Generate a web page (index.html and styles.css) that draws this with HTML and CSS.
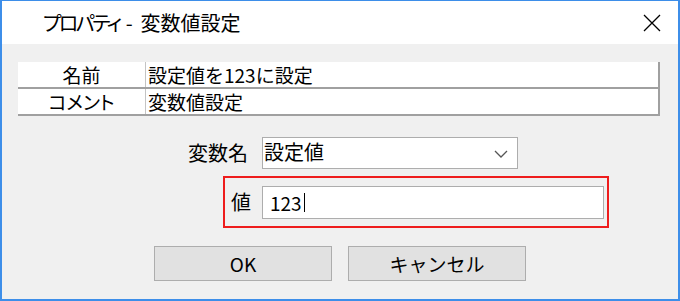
FILE: index.html
```html
<!DOCTYPE html>
<html lang="ja">
<head>
<meta charset="utf-8">
<title>プロパティ - 変数値設定</title>
<link rel="stylesheet" href="styles.css">
</head>
<body>
<div class="window">
  <div class="titlebar">
    <div class="title"><span class="t-kana">プロパティ</span><span class="t-dash">-</span><span>変数値設定</span></div>
    <svg class="close" width="18" height="18" viewBox="0 0 18 18"><path d="M1 1 L17 17 M17 1 L1 17" stroke="#000" stroke-width="1.3" fill="none"/></svg>
  </div>
  <div class="client">
    <div class="grid">
      <div class="row">
        <div class="cell key">名前</div>
        <div class="cell val">設定値を123に設定</div>
      </div>
      <div class="row">
        <div class="cell key"><span class="kana">コメント</span></div>
        <div class="cell val">変数値設定</div>
      </div>
    </div>
    <div class="field-row">
      <div class="label">変数名</div>
      <div class="combo">
        <span>設定値</span>
        <svg class="chev" width="14" height="8" viewBox="0 0 14 8"><path d="M1 1 L7 7 L13 1" stroke="#555" stroke-width="1.3" fill="none"/></svg>
      </div>
    </div>
    <div class="highlight">
      <div class="label small">値</div>
      <div class="textbox"><span>123</span><span class="caret"></span></div>
    </div>
    <div class="buttons">
      <div class="btn">OK</div>
      <div class="btn">キャンセル</div>
    </div>
  </div>
</div>
</body>
</html>
```
FILE: styles.css
```css
html, body {
  margin: 0;
  padding: 0;
  background: #ffffff;
}
body {
  font-family: "Noto Sans CJK JP", "Noto Sans", sans-serif;
  color: #000;
}
.kana {
  font-feature-settings: "palt";
}
.window {
  width: 680px;
  height: 301px;
  box-sizing: border-box;
  border: 2px solid #3d8ee9;
  border-top-width: 1px;
  display: flex;
  flex-direction: column;
  background: #f0f0f0;
}
.titlebar {
  height: 43px;
  flex: none;
  background: #fff;
  display: flex;
  align-items: center;
  justify-content: space-between;
  padding: 0 17px 0 41px;
}
.title {
  display: flex;
  align-items: center;
  font-size: 20px;
  line-height: 20px;
  white-space: nowrap;
}
.t-kana {
  font-feature-settings: "palt";
  letter-spacing: -2.5px;
}
.t-dash {
  margin: 0 8px 0 6px;
}
.close {
  display: block;
}
.client {
  flex: 1;
  padding: 18px 16px 0 16px;
  display: flex;
  flex-direction: column;
}
.grid {
  background: #fff;
  border-right: 2px solid #a0a0a0;
  width: 640px;
}
.row {
  display: flex;
  height: 25px;
  border-bottom: 2px solid #a0a0a0;
}
.cell {
  font-size: 19px;
  line-height: 25px;
  white-space: nowrap;
}
.key {
  width: 127px;
  border-right: 1px solid #c4c4c4;
  text-align: center;
}
.val {
  padding-left: 2px;
}
.field-row {
  display: flex;
  align-items: center;
  margin-top: 21px;
  margin-left: 170px;
}
.label {
  width: 60px;
  text-align: right;
  font-size: 20px;
  line-height: 20px;
  margin-right: 14px;
}
.combo {
  width: 256px;
  height: 32px;
  box-sizing: border-box;
  border: 1px solid #adadad;
  background: #fff;
  display: flex;
  align-items: center;
  justify-content: space-between;
  padding: 0 9px 0 1px;
  font-size: 20px;
  line-height: 20px;
}
.combo span {
  padding-bottom: 2px;
}
.chev {
  display: block;
  margin-top: 2px;
}
.highlight {
  margin-top: 7px;
  margin-left: 205px;
  width: 386px;
  height: 52px;
  box-sizing: border-box;
  border: 2px solid #ee1c1c;
  display: flex;
  align-items: center;
  padding-left: 6px;
}
.label.small {
  width: 22px;
  text-align: left;
  margin-right: 9px;
}
.textbox {
  width: 342px;
  height: 33px;
  box-sizing: border-box;
  border: 1px solid #adadad;
  background: #fff;
  display: flex;
  align-items: center;
  padding-left: 7px;
  font-size: 19px;
  line-height: 19px;
}
.caret {
  width: 1px;
  height: 19px;
  background: #000;
  margin-left: 2px;
}
.buttons {
  display: flex;
  gap: 16px;
  margin-top: 18px;
  margin-left: 136px;
}
.btn {
  width: 178px;
  height: 35px;
  box-sizing: border-box;
  background: #e1e1e1;
  border: 1px solid #adadad;
  display: flex;
  align-items: center;
  justify-content: center;
  font-size: 19px;
  line-height: 19px;
}
```
